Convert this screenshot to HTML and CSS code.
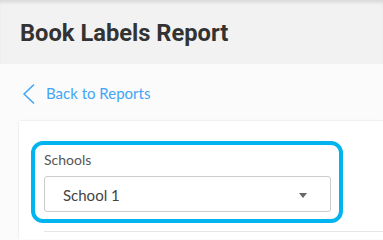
FILE: index.html
```html
<!DOCTYPE html>
<html lang="en">
<head>
<meta charset="utf-8">
<title>Book Labels Report</title>
<link rel="stylesheet" href="styles.css">
</head>
<body>
<header class="page-header">
  <h1 class="page-title">Book Labels Report</h1>
</header>
<main class="page-body">
  <a class="back-link" href="#">
    <svg class="back-icon" width="13" height="20" viewBox="0 0 13 20" aria-hidden="true">
      <path d="M11.5 1 L2 10 L11.5 19" fill="none" stroke="#42a5f5" stroke-width="1.6" stroke-linecap="round" stroke-linejoin="round"/>
    </svg>
    <span class="back-text">Back to Reports</span>
  </a>
  <section class="card">
    <div class="highlight">
      <label class="field-label">Schools</label>
      <div class="select">
        <span class="select-value">School 1</span>
        <span class="caret"></span>
      </div>
    </div>
    <div class="divider"></div>
  </section>
</main>
</body>
</html>
```
FILE: styles.css
```css
html, body {
  margin: 0;
  padding: 0;
}
body {
  background: #fbfbfb;
  font-family: "Lato", "Open Sans", sans-serif;
  overflow: hidden;
  height: 239px;
  display: flex;
  flex-direction: column;
}
.page-header {
  height: 64px;
  flex: none;
  background: #f2f2f2;
  box-shadow: inset 0 4px 4px -2px rgba(0,0,0,0.12);
  display: flex;
  align-items: center;
  padding-left: 20px;
}
.page-title {
  margin: 0;
  font-family: "Roboto", sans-serif;
  font-weight: 700;
  font-size: 23.7px;
  line-height: 28px;
  color: #333333;
  padding-top: 2px;
}
.page-body {
  flex: 1;
  min-height: 0;
  display: flex;
  flex-direction: column;
}
.back-link {
  flex: none;
  display: flex;
  align-items: center;
  height: 57px;
  padding-left: 22px;
  text-decoration: none;
  color: #42a5f5;
}
.back-icon {
  display: block;
  margin-top: 2px;
}
.back-text {
  margin-left: 11px;
  font-size: 15px;
  line-height: 20px;
  margin-top: 1px;
}
.card {
  flex: 1;
  min-height: 0;
  margin-left: 19px;
  background: #ffffff;
  box-shadow: 0 0 2px rgba(0,0,0,0.12);
  padding: 20px 0 0 12px;
  overflow: hidden;
}
.highlight {
  width: 287px;
  border: 4px solid #00b4ef;
  border-radius: 12px;
  padding: 5px 8px 7px 9px;
  display: flex;
  flex-direction: column;
}
.field-label {
  font-size: 14px;
  line-height: 20px;
  color: #555555;
}
.select {
  margin-top: 6px;
  height: 34px;
  border: 1px solid #cccccc;
  border-radius: 3px;
  display: flex;
  align-items: center;
  justify-content: space-between;
  padding: 0 23px 0 18px;
}
.select-value {
  font-size: 15px;
  color: #444444;
  line-height: 20px;
  margin-top: 2px;
}
.caret {
  width: 0;
  height: 0;
  border-left: 4.5px solid transparent;
  border-right: 4.5px solid transparent;
  border-top: 5px solid #666666;
  margin-top: 2px;
}
.divider {
  margin-top: 8px;
  margin-left: 13px;
  border-top: 1px solid #e6e6e6;
}
```
